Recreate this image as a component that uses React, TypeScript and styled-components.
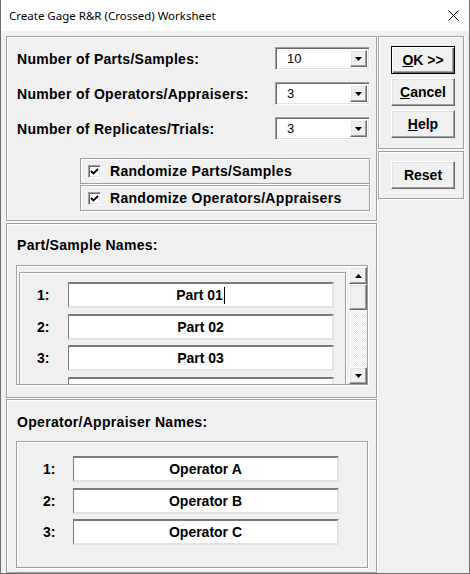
import { Fragment } from 'react';
import styled, { createGlobalStyle, css } from 'styled-components';

const GlobalStyle = createGlobalStyle`
  html, body {
    margin: 0;
    padding: 0;
    background: #ffffff;
  }
  body {
    font-family: "Liberation Sans", Arial, sans-serif;
    color: #000;
  }
  * {
    box-sizing: border-box;
  }
`;

// classic windows 3D looks
const etched = css`
  border: 1px solid #a0a0a0;
  box-shadow: inset 1px 1px 0 #ffffff, 1px 1px 0 #ffffff;
`;

const raised = css`
  background: #f0f0f0;
  border: 1px solid;
  border-color: #ffffff #696969 #696969 #ffffff;
  box-shadow: inset -1px -1px 0 #a0a0a0, inset 1px 1px 0 #e3e3e3;
`;

const sunken = css`
  background: #ffffff;
  border: 1px solid;
  border-color: #a0a0a0 #ffffff #ffffff #a0a0a0;
  box-shadow: inset 1px 1px 0 #696969, inset -1px -1px 0 #e3e3e3;
`;

const Window = styled.div`
  width: 470px;
  height: 574px;
  display: flex;
  flex-direction: column;
  background: #f0f0f0;
  border: 1px solid #6e6e6e;
  border-top: none;
  overflow: hidden;
`;

const TitleBar = styled.div`
  height: 31px;
  flex: none;
  display: flex;
  align-items: center;
  justify-content: space-between;
  background: #ffffff;
  padding: 0 9px 1px 8px;
  font-family: "Noto Sans", "Open Sans", sans-serif;
  font-size: 11.5px;
  color: #000;
`;

const CloseIcon = styled.svg`
  width: 11px;
  height: 11px;
  margin-right: 1px;
`;

const Client = styled.div`
  flex: 1;
  display: flex;
  padding: 5px 0 0 5px;
  min-height: 0;
`;

const LeftCol = styled.div`
  width: 371px;
  display: flex;
  flex-direction: column;
`;

const RightCol = styled.div`
  width: 86px;
  margin-left: 1px;
  display: flex;
  flex-direction: column;
  gap: 2px;
`;

const Panel = styled.div<{ $h?: number; $gap?: number; $pad: string }>`
  ${etched};
  height: ${(p) => (p.$h ? `${p.$h}px` : 'auto')};
  flex: ${(p) => (p.$h ? 'none' : '1')};
  margin-top: ${(p) => p.$gap ?? 0}px;
  padding: ${(p) => p.$pad};
  display: flex;
  flex-direction: column;
`;

const SettingsGrid = styled.div`
  display: grid;
  grid-template-columns: 1fr 95px;
  grid-auto-rows: 23px;
  row-gap: 12px;
  align-items: center;
`;

const Label = styled.div`
  font-size: 14px;
  font-weight: bold;
  letter-spacing: 0.3px;
  line-height: 16px;
`;

const Combo = styled.div`
  ${sunken};
  height: 23px;
  display: flex;
  align-items: stretch;
  padding: 2px;
`;

const ComboValue = styled.div`
  flex: 1;
  font-size: 13px;
  line-height: 17px;
  padding-left: 9px;
`;

const ArrowBtn = styled.div`
  ${raised};
  width: 17px;
  display: flex;
  align-items: center;
  justify-content: center;
`;

const CheckGroup = styled.div`
  margin-top: 18px;
  display: flex;
  flex-direction: column;
  align-items: flex-end;
  gap: 1px;
`;

const CheckFrame = styled.label`
  ${etched};
  width: 290px;
  height: 26px;
  display: flex;
  align-items: center;
  gap: 9px;
  padding-left: 7px;
  font-size: 14px;
  font-weight: bold;
  letter-spacing: 0.3px;
`;

const CheckBox = styled.span`
  ${sunken};
  width: 13px;
  height: 13px;
  display: flex;
  align-items: center;
  justify-content: center;
`;

const Header = styled(Label)`
  padding-left: 1px;
`;

const ListFrame = styled.div`
  ${etched};
  margin-top: 12px;
  height: 120px;
  display: flex;
`;

const Viewport = styled.div`
  flex: 1;
  overflow: hidden;
  padding: 6px 3px 0 2px;
`;

const InnerFrame = styled.div`
  ${etched};
  padding: 9px 11px 12px 17px;
`;

const NameGrid = styled.div<{ $col: number }>`
  display: grid;
  grid-template-columns: ${(p) => p.$col}px 1fr;
  grid-auto-rows: 26px;
  row-gap: 5.5px;
  align-items: center;
`;

const RowNum = styled.div`
  font-size: 14px;
  font-weight: bold;
`;

const NameField = styled.div`
  height: 26px;
  background: #ffffff;
  border-style: solid;
  border-width: 2px 2px 2px 1px;
  border-color: #7a7a7a #e3e3e3 #e3e3e3 #7a7a7a;
  display: flex;
  align-items: center;
  justify-content: center;
  font-size: 14px;
  font-weight: bold;
`;

const Caret = styled.span`
  display: inline-block;
  width: 1px;
  height: 17px;
  background: #000;
  margin-left: 1px;
`;

const ScrollBar = styled.div`
  width: 18px;
  margin-top: 1px;
  display: flex;
  flex-direction: column;
`;

const ScrollBtn = styled.div<{ $h: number }>`
  ${raised};
  height: ${(p) => p.$h}px;
  flex: none;
  display: flex;
  align-items: center;
  justify-content: center;
`;

const Track = styled.div`
  flex: 1;
  background-color: #f0f0f0;
  background-image: repeating-conic-gradient(#ffffff 0 25%, #e8e8e8 0 50%);
  background-size: 2px 2px;
`;

const OpFrame = styled.div`
  ${etched};
  margin-top: 11px;
  height: 127px;
  padding: 14px 28px 0 26px;
`;

const ButtonBox = styled.div<{ $h: number }>`
  ${etched};
  height: ${(p) => p.$h}px;
  display: flex;
  flex-direction: column;
  align-items: center;
  gap: 4px;
  padding: 9px 0 0 4px;
`;

const Button = styled.button<{ $default?: boolean }>`
  ${raised};
  width: 64px;
  height: 28px;
  padding: 0;
  font-family: "Liberation Sans", Arial, sans-serif;
  font-size: 14px;
  font-weight: bold;
  color: #000;
  ${(p) =>
    p.$default &&
    css`
      border: 1px solid #000;
      box-shadow: inset 1px 1px 0 #ffffff, inset -1px -1px 0 #696969, inset -2px -2px 0 #a0a0a0;
    `}
`;

const Arrow = ({ up }: { up?: boolean }) => (
  <svg width="7" height="4" viewBox="0 0 7 4">
    <polygon points={up ? '0,4 7,4 3.5,0' : '0,0 7,0 3.5,4'} fill="#000" />
  </svg>
);

const Check = () => (
  <svg width="9" height="9" viewBox="0 0 9 9">
    <polyline points="1,4 3.5,6.5 8,2" fill="none" stroke="#000" strokeWidth="1.8" />
  </svg>
);

const settings = [
  { label: 'Number of Parts/Samples:', value: '10' },
  { label: 'Number of Operators/Appraisers:', value: '3' },
  { label: 'Number of Replicates/Trials:', value: '3' },
];

// only the rows that sit inside the visible part of the list
const parts = ['Part 01', 'Part 02', 'Part 03', ''];
const operators = ['Operator A', 'Operator B', 'Operator C'];

const App = () => {
  return (
    <>
      <GlobalStyle />
      <Window>
        <TitleBar>
          <span>Create Gage R&amp;R (Crossed) Worksheet</span>
          <CloseIcon viewBox="0 0 11 11">
            <path d="M0.5 0.5 L10.5 10.5 M10.5 0.5 L0.5 10.5" stroke="#000" strokeWidth="1" />
          </CloseIcon>
        </TitleBar>
        <Client>
          <LeftCol>
            <Panel $h={185} $pad="10px 6px 0 10px">
              <SettingsGrid>
                {settings.map((s) => (
                  <Fragment key={s.label}>
                    <Label>{s.label}</Label>
                    <Combo>
                      <ComboValue>{s.value}</ComboValue>
                      <ArrowBtn>
                        <Arrow />
                      </ArrowBtn>
                    </Combo>
                  </Fragment>
                ))}
              </SettingsGrid>
              <CheckGroup>
                <CheckFrame>
                  <CheckBox>
                    <Check />
                  </CheckBox>
                  Randomize Parts/Samples
                </CheckFrame>
                <CheckFrame>
                  <CheckBox>
                    <Check />
                  </CheckBox>
                  Randomize Operators/Appraisers
                </CheckFrame>
              </CheckGroup>
            </Panel>

            <Panel $h={175} $gap={2} $pad="13px 8px 0 9px">
              <Header>Part/Sample Names:</Header>
              <ListFrame>
                <Viewport>
                  <InnerFrame>
                    <NameGrid $col={31}>
                      {parts.map((p, i) => (
                        <Fragment key={i}>
                          <RowNum>{p ? `${i + 1}:` : ''}</RowNum>
                          <NameField>
                            {p}
                            {i === 0 && <Caret />}
                          </NameField>
                        </Fragment>
                      ))}
                    </NameGrid>
                  </InnerFrame>
                </Viewport>
                <ScrollBar>
                  <ScrollBtn $h={17}>
                    <Arrow up />
                  </ScrollBtn>
                  <ScrollBtn $h={26} />
                  <Track />
                  <ScrollBtn $h={17}>
                    <Arrow />
                  </ScrollBtn>
                </ScrollBar>
              </ListFrame>
            </Panel>

            <Panel $gap={1} $pad="14px 8px 0 9px">
              <Header>Operator/Appraiser Names:</Header>
              <OpFrame>
                <NameGrid $col={30}>
                  {operators.map((o, i) => (
                    <Fragment key={o}>
                      <RowNum>{i + 1}:</RowNum>
                      <NameField>{o}</NameField>
                    </Fragment>
                  ))}
                </NameGrid>
              </OpFrame>
            </Panel>
          </LeftCol>

          <RightCol>
            <ButtonBox $h={113}>
              <Button $default>
                <u>O</u>K &gt;&gt;
              </Button>
              <Button>
                <u>C</u>ancel
              </Button>
              <Button>
                <u>H</u>elp
              </Button>
            </ButtonBox>
            <ButtonBox $h={48}>
              <Button>Reset</Button>
            </ButtonBox>
          </RightCol>
        </Client>
      </Window>
    </>
  );
};

export default App;
